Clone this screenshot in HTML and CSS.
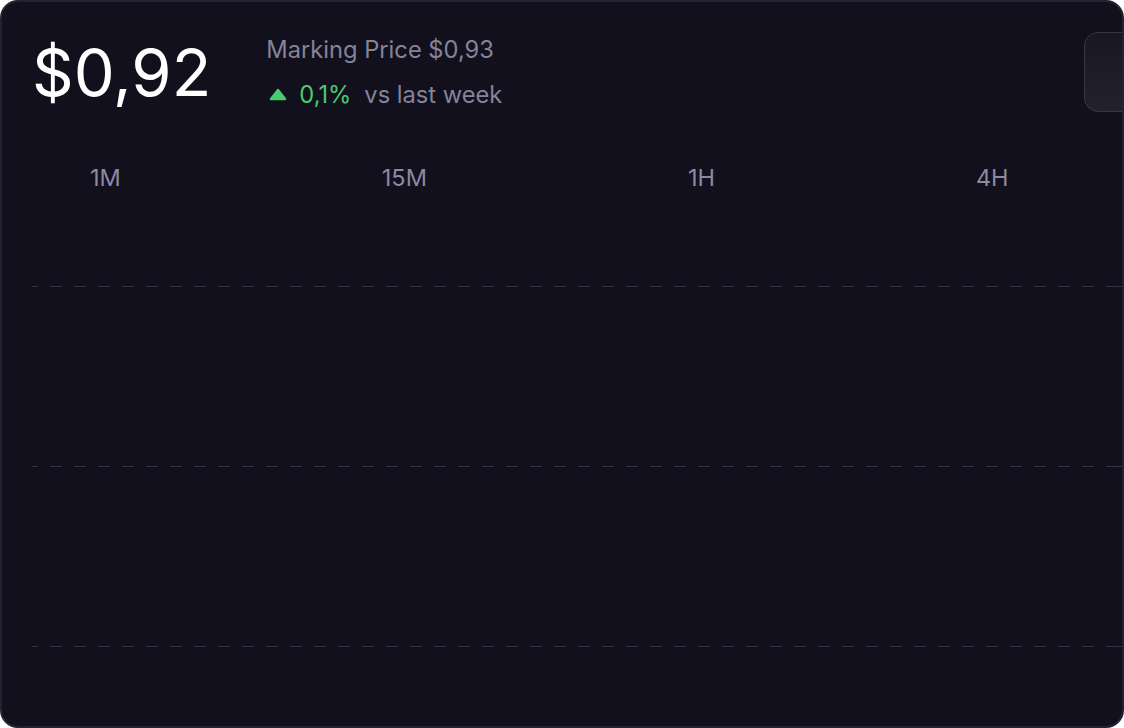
FILE: index.html
```html
<!DOCTYPE html>
<html lang="en">
<head>
  <meta charset="UTF-8">
  <title>Price Chart</title>
  <link rel="stylesheet" href="styles.css">
</head>
<body>

  <div class="card">
    <div class="header">
      <div class="price">$0,92</div>
      <div class="info">
        <div class="marking">Marking Price $0,93</div>
        <div class="change">
          <svg class="arrow" width="18" height="13" viewBox="0 0 18 13">
            <path d="M9 2 L16 11 L2 11 Z" fill="#4cc96e" stroke="#4cc96e" stroke-width="2.5" stroke-linejoin="round"/>
          </svg>
          <span class="pct">0,1%</span>
          <span class="vs">vs last week</span>
        </div>
      </div>
      <div class="picker"></div>
    </div>

    <div class="tabs">
      <span class="tab">1M</span>
      <span class="tab">15M</span>
      <span class="tab">1H</span>
      <span class="tab">4H</span>
    </div>

    <div class="chart">
      <div class="grid-line"></div>
      <div class="grid-line"></div>
      <div class="grid-line"></div>
    </div>
  </div>

</body>
</html>
```

FILE: styles.css
```css
body {
  margin: 0;
  background: #ffffff;
  font-family: Inter, "Noto Sans", sans-serif;
}
.card {
  box-sizing: border-box;
  width: 1124px;
  height: 728px;
  background-color: #12101c;
  border: 2px solid #252333;
  border-radius: 18px;
  overflow: hidden;
  padding: 30px 0 0 30px;
}
.header {
  display: flex;
  align-items: center;
  height: 80px;
}
.price {
  font-size: 65px;
  line-height: 1;
  color: #ffffff;
}
.info {
  margin-left: 55px;
  display: flex;
  flex-direction: column;
  gap: 11px;
  font-size: 23.7px;
  line-height: 34px;
  color: #85839a;
}
.change {
  display: flex;
  align-items: center;
}
.arrow {
  margin-left: 3px;
  margin-right: 12px;
}
.pct {
  color: #4cc96e;
  margin-right: 13px;
}
.picker {
  margin-left: auto;
  margin-right: -64px;
  width: 100px;
  height: 78px;
  flex-shrink: 0;
  border: 1px solid #393745;
  border-radius: 14px;
  background: linear-gradient(to bottom, #191723, #23212c);
}
.tabs {
  display: flex;
  gap: 261px;
  padding-left: 58px;
  margin-top: 49px;
  font-size: 23.5px;
  line-height: 34px;
  color: #8c89a1;
}
.chart {
  margin-top: 91px;
  display: flex;
  flex-direction: column;
  gap: 179px;
}
.grid-line {
  height: 1px;
  background: repeating-linear-gradient(to right, #363444 0 12px, transparent 12px 24px);
  background-position: -6px 0;
}
```
